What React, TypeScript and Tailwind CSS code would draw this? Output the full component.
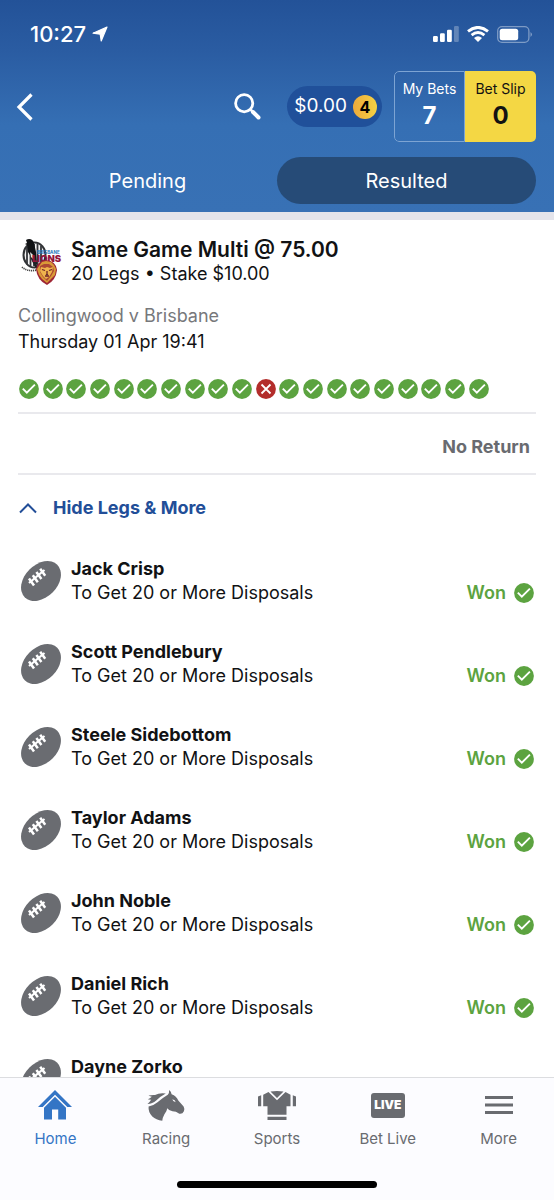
import type { ReactNode } from "react";

const legs = [
  "Jack Crisp",
  "Scott Pendlebury",
  "Steele Sidebottom",
  "Taylor Adams",
  "John Noble",
  "Daniel Rich",
  "Dayne Zorko",
];

const results = Array.from({ length: 20 }, (_, i) => i !== 10);

function ResultIcon({ won }: { won: boolean }) {
  return (
    <svg viewBox="0 0 20 20" className="size-5 shrink-0" role="img" aria-label={won ? "Won" : "Lost"}>
      <circle cx="10" cy="10" r="9.9" fill={won ? "#5ca340" : "#b32d2b"} />
      {won ? (
        <path d="M3.800 9.700l4 4 8.100-8.100" fill="none" stroke="#fff" strokeWidth="1.900" />
      ) : (
        <path d="M5.500 5.500l9 9M14.500 5.500l-9 9" fill="none" stroke="#fff" strokeWidth="1.800" />
      )}
    </svg>
  );
}

function Football() {
  return (
    <svg viewBox="0 0 40 40" className="mt-1 ml-[3px] size-10 shrink-0" aria-hidden="true">
      <ellipse cx="20" cy="20" rx="23" ry="16.300" transform="rotate(-45 20 20)" fill="#6a6c71" />
      <g fill="none" stroke="#fff">
        <path d="M8 22L23.500 9" strokeWidth="2.200" />
        <path
          d="M8 17.500L13 24.500M11.800 14.300L16.800 21.300M15.400 11L20.400 18M19.200 7.700L24.200 14.700"
          strokeWidth="2.500"
        />
      </g>
    </svg>
  );
}

function TeamLogos() {
  return (
    <svg viewBox="0 0 44 48" className="ml-0.5 h-12 w-11 shrink-0" role="img" aria-label="Collingwood and Brisbane">
      <ellipse cx="14.500" cy="17" rx="12" ry="13.500" fill="#303235" />
      <ellipse cx="14.500" cy="17" rx="10" ry="11.500" fill="#f5f5f5" />
      <path d="M7 9v17M10.500 7v21M14 6v22M17.500 6v22M21 8v19" stroke="#34363a" strokeWidth="1.800" />
      <path d="M6 2c3-2 7-1 8 3l2 9 1 12-2 1-2-5-5-8-1-7-2-1 2-1z" fill="#111315" />
      <path d="M11 14l4 4 2 10 3 4-5-3-4-8z" fill="#202225" />
      <path d="M10 14l3 3 1 5-3-3z" fill="#eee" />
      <path d="M2 29q5 5 15 3" fill="none" stroke="#444" strokeWidth="1.700" strokeDasharray="1.200 .8" />
      <text x="17" y="15.500" fontFamily="Inter, sans-serif" fontSize="4.500" fontWeight="700" fill="#2678bb">BRISBANE</text>
      <text x="12" y="24" fontFamily="Inter, sans-serif" fontSize="9.500" fontWeight="900" fill="#94163c">LIONS</text>
      <path d="M26 22q-9 1-10 9 1 11 11 16 9-5 10-15-1-9-11-10z" fill="#9f2635" />
      <path d="M26 23l-4 1-3 4-2 3 2 6 3 4 5 4 4-4 4-4 1-6-2-4-3-3z" fill="#d99a37" />
      <path d="M20 28l4-2h5l4 3 1 4-3 5-4 5-4-4-3-5z" fill="#ac4833" />
      <path d="M21 29l4 1 2-1 3 1 3-1-1 5-3 5-3 2-3-3-3-5z" fill="#efb34d" />
      <path d="M22 31.500l3 1M32 31.500l-3 1M25 38h4M27 33v3" stroke="#6f2328" strokeWidth="1.300" />
      <path d="M25.500 36h3l-1.500 1.500z" fill="#57202a" />
    </svg>
  );
}

function SignalIcon() {
  return (
    <svg viewBox="0 0 26 16" className="h-4 w-[26px]" aria-hidden="true" fill="#fff">
      <rect y="10" width="4.800" height="6" rx="1.200" />
      <rect x="7" y="7.300" width="4.800" height="8.700" rx="1.200" />
      <rect x="14" y="3.700" width="4.800" height="12.300" rx="1.200" />
      <rect x="21" width="4.800" height="16" rx="1.200" opacity=".27" />
    </svg>
  );
}

function WifiIcon() {
  return (
    <svg viewBox="0 0 22 16" className="ml-2 h-4 w-[22px]" aria-hidden="true">
      <g fill="none" stroke="#fff" strokeWidth="2.900">
        <path d="M1 5.400q10-8 20 0" />
        <path d="M4.600 9.100q6.400-5.200 12.800 0" />
      </g>
      <path d="M7 12q4-3.300 8 0l-4 4z" fill="#fff" />
    </svg>
  );
}

function BatteryIcon() {
  return (
    <svg viewBox="0 0 36 17" className="ml-2 h-[17px] w-9" aria-hidden="true">
      <rect x=".7" y=".7" width="31.200" height="15.600" rx="4.300" fill="none" stroke="#fff" strokeOpacity=".4" strokeWidth="1.300" />
      <rect x="2.700" y="2.700" width="18.500" height="11.600" rx="2.500" fill="#fff" />
      <path d="M33.500 6q3 2.500 0 5z" fill="#fff" opacity=".4" />
    </svg>
  );
}

function HomeIcon() {
  return (
    <svg viewBox="0 0 34 30" className="h-[30px] w-[34px]" aria-hidden="true" fill="currentColor">
      <path d="M17 0L34 17H29.300L17 4.700 4.700 17H0z" />
      <path d="M17 6.800L28 17.700V29.500H20.200V19.500H14V29.500H6V17.700z" />
    </svg>
  );
}

function HorseIcon() {
  return (
    <svg viewBox="0 0 38 31" className="h-[31px] w-[38px]" aria-hidden="true" fill="currentColor">
      <path
        fillRule="evenodd"
        d="M22 0Q24.300 1.500 24.600 4.200Q29.500 6 31.300 10.500L36.600 16.500Q37.800 18.500 36.900 21.300Q35.500 24.300 32.300 23.700Q29 21.300 25.500 21.300Q21.800 20.800 20.300 18.300Q20 21 17.300 24.500Q15.600 27.500 15.300 30.700Q9 30 5.300 26.500Q1 22 1.600 16.500Q6.500 15.800 10.500 12.300Q15.500 8 20.800 4.800Q22.500 3 22 0ZM25.300 9.300Q26 12 28.700 12.300Q28.300 9.800 25.300 9.300Z"
      />
      <path d="M18.800 3.500Q12.500 2.500 8 5Q4.500 4.800 1.500 5.600Q3 6.500 4.800 6.800Q3 8.500.8 9.200Q2.600 9.900 4.300 9.600Q3 12 .5 13.900Q5.500 13.800 9.200 10.500Q13.500 6.300 18.800 3.500Z" />
    </svg>
  );
}

function JerseyIcon() {
  return (
    <svg viewBox="0 0 38 29" className="h-[29px] w-[38px]" aria-hidden="true" fill="currentColor">
      <path d="M10.500 1L19 9.200 27.500 1 32.500 3.700V15.300H28.500V23.800H9.500V15.300H5.200V3.700z" />
      <path d="M12.500.6Q19-.4 25.500.6L19 7.100zM0 5.400l3.200-1.200v11H0zM34.800 4.200L38 5.400v9.800h-3.200zM9.500 25.800h19V29h-19z" />
    </svg>
  );
}

function LiveIcon() {
  return (
    <span className="flex h-[25px] w-[34px] items-center justify-center rounded-[3px] bg-[#696b70] text-[12px] leading-none font-black text-white">
      LIVE
    </span>
  );
}

function MenuIcon() {
  return (
    <svg viewBox="0 0 28 20" className="h-5 w-7" aria-hidden="true" fill="currentColor">
      <path d="M0 1h28v3H0zM0 8.500h28v3H0zM0 16h28v3H0z" />
    </svg>
  );
}

function NavItem({ label, icon, active = false }: { label: string; icon: ReactNode; active?: boolean }) {
  return (
    <a
      href="#"
      aria-current={active ? "page" : undefined}
      className={`flex flex-1 flex-col items-center ${active ? "text-[#3475c5]" : "text-[#696b70]"}`}
    >
      <span className="flex h-8 items-center">{icon}</span>
      <span className="mt-2 text-[15px] leading-5">{label}</span>
    </a>
  );
}

export default function App() {
  return (
    <div className="flex h-screen flex-col overflow-hidden bg-white font-['Inter',sans-serif] text-[#111214]">
      <header className="shrink-0 border-b-8 border-[#e4e4eb] bg-[linear-gradient(to_bottom,#235298_0px,#2a5ca2_50px,#356fb4_125px,#3871b5_212px)] pb-2 text-white">
        <div className="flex h-[68px] items-center justify-between pr-[21px] pl-[30px]">
          <div className="flex items-center gap-1.5">
            <span className="text-[22px] font-medium">10:27</span>
            <svg viewBox="0 0 16 16" className="size-4" aria-hidden="true">
              <path
                d="M15 1L9.200 15 8.200 8.200 1 7.200z"
                fill="#fff"
                stroke="#fff"
                strokeWidth="1.200"
                strokeLinejoin="round"
              />
            </svg>
          </div>
          <div className="flex items-center">
            <SignalIcon />
            <WifiIcon />
            <BatteryIcon />
          </div>
        </div>

        <div className="mt-[3px] flex items-center pr-[18px] pl-4">
          <button aria-label="Back" className="py-3">
            <svg viewBox="0 0 18 28" className="h-7 w-[18px]" aria-hidden="true">
              <path d="M15.500 1.500L3 14l12.500 12.500" fill="none" stroke="#fff" strokeWidth="3.200" />
            </svg>
          </button>
          <button aria-label="Search" className="ml-auto">
            <svg viewBox="0 0 27 27" className="size-[27px]" aria-hidden="true">
              <circle cx="10.200" cy="10.200" r="8.600" fill="none" stroke="#fff" strokeWidth="2.800" />
              <path d="M16.500 16.500l2.500 2.500" stroke="#fff" strokeWidth="2.500" />
              <path d="M19 19l5.500 5.500" stroke="#fff" strokeWidth="4" strokeLinecap="round" />
            </svg>
          </button>
          <button className="ml-[26px] flex h-[41px] items-center gap-1.5 rounded-full bg-[#20509a] pr-[5px] pl-[7px]">
            <span className="text-[19px]">$0.00</span>
            <span className="flex size-6 items-center justify-center rounded-full bg-linear-to-r from-[#eeaa3b] to-[#f4d244] text-[16px] font-bold text-black">
              4
            </span>
          </button>
          <div className="ml-3 flex h-[71px] overflow-hidden rounded-[5px]">
            <button className="flex w-[71px] flex-col items-center rounded-l-[5px] border border-[#7da4d3] pt-1.5">
              <span className="text-[14px] leading-[22px]">My Bets</span>
              <span className="text-[24px] leading-8 font-bold">7</span>
            </button>
            <button className="flex w-[71px] flex-col items-center bg-[#f4d744] pt-[7px] text-[#121212]">
              <span className="text-[14px] leading-[22px]">Bet Slip</span>
              <span className="text-[24px] leading-8 font-bold">0</span>
            </button>
          </div>
        </div>

        <div className="mt-[15px] flex h-[47px] px-[18px] text-[20px]">
          <button className="flex-1 rounded-full">Pending</button>
          <button className="flex-1 rounded-full bg-[#264b77]">Resulted</button>
        </div>
      </header>

      <main className="min-h-0 flex-1 overflow-y-auto px-[18px] pt-[18px] [scrollbar-width:none]">
        <div className="flex gap-[7px]">
          <TeamLogos />
          <div>
            <h1 className="text-[21px] leading-6 font-semibold">Same Game Multi @ 75.00</h1>
            <p className="text-[18px] leading-6">20 Legs • Stake $10.00</p>
          </div>
        </div>

        <div className="mt-[17px] text-[18px] leading-[26px]">
          <p className="text-[#77787b]">Collingwood v Brisbane</p>
          <p>Thursday 01 Apr 19:41</p>
        </div>

        <div className="mt-6 mr-[47px] ml-px flex justify-between">
          {results.map((won, i) => (
            <ResultIcon key={i} won={won} />
          ))}
        </div>

        <div className="mt-[13px] border-y-2 border-[#e9e9ed] pt-[21px] pb-3.5 text-right">
          <p className="pr-1.5 text-[18px] leading-6 font-bold text-[#696b70]">No Return</p>
        </div>

        <button className="mt-[21px] flex items-center gap-4 text-[18px] leading-6 font-bold text-[#224e98]">
          <svg viewBox="0 0 18 12" className="ml-px h-3 w-[18px]" aria-hidden="true">
            <path d="M1 10.500l8-8 8 8" fill="none" stroke="currentColor" strokeWidth="2" />
          </svg>
          Hide Legs &amp; More
        </button>

        <ul className="mt-[37px] flex flex-col gap-[35px]">
          {legs.map((name) => (
            <li key={name} className="flex gap-[10px]">
              <Football />
              <div className="flex-1 text-[18px] leading-6">
                <h2 className="font-bold">{name}</h2>
                <p>To Get 20 or More Disposals</p>
              </div>
              <div className="flex items-center gap-2 self-end pr-0.5 text-[18px] leading-6 font-semibold text-[#5ca340]">
                Won
                <ResultIcon won />
              </div>
            </li>
          ))}
        </ul>
      </main>

      <footer className="shrink-0 border-t border-[#dcdde0] bg-[#fcfcff] pt-[11px] pb-3">
        <nav className="flex">
          <NavItem label="Home" icon={<HomeIcon />} active />
          <NavItem label="Racing" icon={<HorseIcon />} />
          <NavItem label="Sports" icon={<JerseyIcon />} />
          <NavItem label="Bet Live" icon={<LiveIcon />} />
          <NavItem label="More" icon={<MenuIcon />} />
        </nav>
        <div className="mx-auto mt-8 h-[7px] w-[36%] rounded-full bg-black" />
      </footer>
    </div>
  );
}
